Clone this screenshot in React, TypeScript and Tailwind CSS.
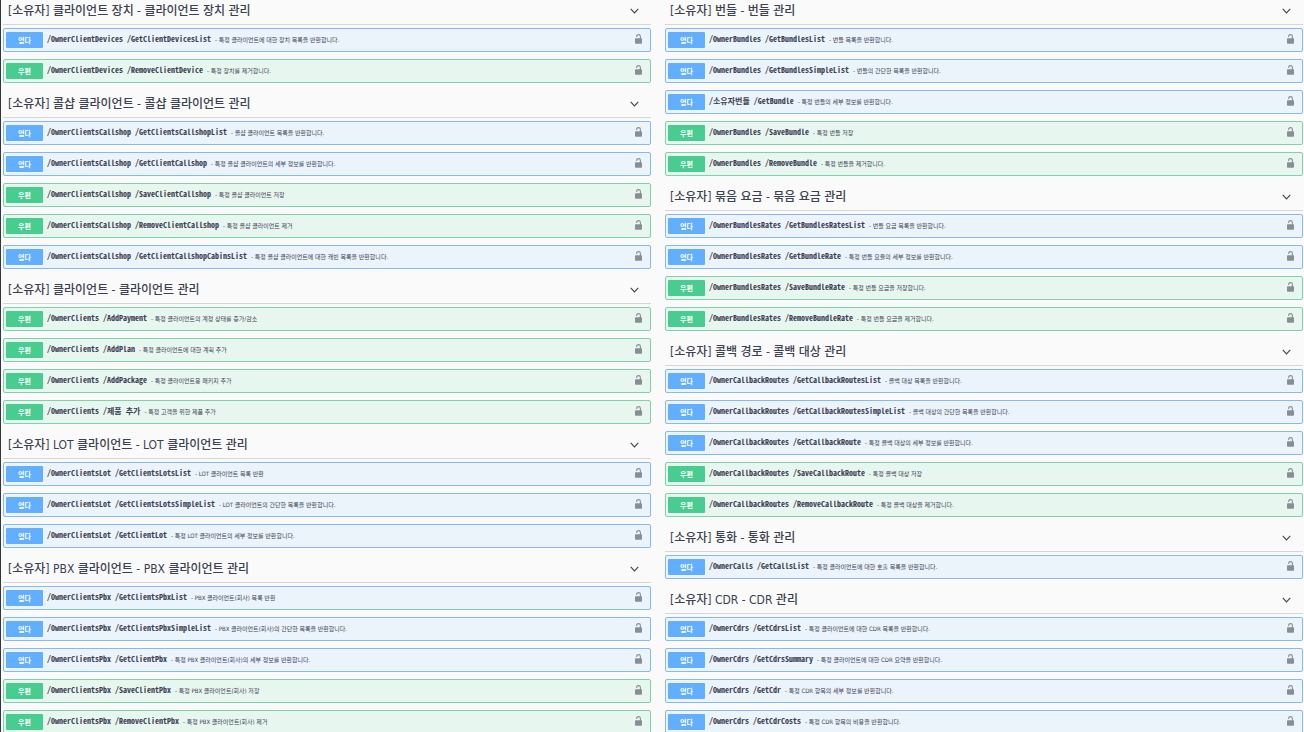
import React, { useState } from 'react';
import clsx from 'clsx';

type Method = 'get' | 'post';

interface Endpoint {
  method: Method;
  group: string;
  action: string;
  summary: string;
}

interface ApiSection {
  title: string;
  endpoints: Endpoint[];
}

const get = (group: string, action: string, summary: string): Endpoint => ({ method: 'get', group, action, summary });
const post = (group: string, action: string, summary: string): Endpoint => ({ method: 'post', group, action, summary });

const LEFT: ApiSection[] = [
  {
    title: '[소유자] 클라이언트 장치 - 클라이언트 장치 관리',
    endpoints: [
      get('/OwnerClientDevices', '/GetClientDevicesList', '특정 클라이언트에 대한 장치 목록을 반환합니다.'),
      post('/OwnerClientDevices', '/RemoveClientDevice', '특정 장치를 제거합니다.'),
    ],
  },
  {
    title: '[소유자] 콜샵 클라이언트 - 콜샵 클라이언트 관리',
    endpoints: [
      get('/OwnerClientsCallshop', '/GetClientsCallshopList', '콜샵 클라이언트 목록을 반환합니다.'),
      get('/OwnerClientsCallshop', '/GetClientCallshop', '특정 콜샵 클라이언트의 세부 정보를 반환합니다.'),
      post('/OwnerClientsCallshop', '/SaveClientCallshop', '특정 콜샵 클라이언트 저장'),
      post('/OwnerClientsCallshop', '/RemoveClientCallshop', '특정 콜샵 클라이언트 제거'),
      get('/OwnerClientsCallshop', '/GetClientCallshopCabinsList', '특정 콜샵 클라이언트에 대한 캐빈 목록을 반환합니다.'),
    ],
  },
  {
    title: '[소유자] 클라이언트 - 클라이언트 관리',
    endpoints: [
      post('/OwnerClients', '/AddPayment', '특정 클라이언트의 계정 상태를 증가/감소'),
      post('/OwnerClients', '/AddPlan', '특정 클라이언트에 대한 계획 추가'),
      post('/OwnerClients', '/AddPackage', '특정 클라이언트용 패키지 추가'),
      post('/OwnerClients', '/제품 추가', '특정 고객을 위한 제품 추가'),
    ],
  },
  {
    title: '[소유자] LOT 클라이언트 - LOT 클라이언트 관리',
    endpoints: [
      get('/OwnerClientsLot', '/GetClientsLotsList', 'LOT 클라이언트 목록 반환'),
      get('/OwnerClientsLot', '/GetClientsLotsSimpleList', 'LOT 클라이언트의 간단한 목록을 반환합니다.'),
      get('/OwnerClientsLot', '/GetClientLot', '특정 LOT 클라이언트의 세부 정보를 반환합니다.'),
    ],
  },
  {
    title: '[소유자] PBX 클라이언트 - PBX 클라이언트 관리',
    endpoints: [
      get('/OwnerClientsPbx', '/GetClientsPbxList', 'PBX 클라이언트(회사) 목록 반환'),
      get('/OwnerClientsPbx', '/GetClientsPbxSimpleList', 'PBX 클라이언트(회사)의 간단한 목록을 반환합니다.'),
      get('/OwnerClientsPbx', '/GetClientPbx', '특정 PBX 클라이언트(회사)의 세부 정보를 반환합니다.'),
      post('/OwnerClientsPbx', '/SaveClientPbx', '특정 PBX 클라이언트(회사) 저장'),
      post('/OwnerClientsPbx', '/RemoveClientPbx', '특정 PBX 클라이언트(회사) 제거'),
    ],
  },
];

const RIGHT: ApiSection[] = [
  {
    title: '[소유자] 번들 - 번들 관리',
    endpoints: [
      get('/OwnerBundles', '/GetBundlesList', '번들 목록을 반환합니다.'),
      get('/OwnerBundles', '/GetBundlesSimpleList', '번들의 간단한 목록을 반환합니다.'),
      get('/소유자번들', '/GetBundle', '특정 번들의 세부 정보를 반환합니다.'),
      post('/OwnerBundles', '/SaveBundle', '특정 번들 저장'),
      post('/OwnerBundles', '/RemoveBundle', '특정 번들을 제거합니다.'),
    ],
  },
  {
    title: '[소유자] 묶음 요금 - 묶음 요금 관리',
    endpoints: [
      get('/OwnerBundlesRates', '/GetBundlesRatesList', '번들 요금 목록을 반환합니다.'),
      get('/OwnerBundlesRates', '/GetBundleRate', '특정 번들 요율의 세부 정보를 반환합니다.'),
      post('/OwnerBundlesRates', '/SaveBundleRate', '특정 번들 요금을 저장합니다.'),
      post('/OwnerBundlesRates', '/RemoveBundleRate', '특정 번들 요금을 제거합니다.'),
    ],
  },
  {
    title: '[소유자] 콜백 경로 - 콜백 대상 관리',
    endpoints: [
      get('/OwnerCallbackRoutes', '/GetCallbackRoutesList', '콜백 대상 목록을 반환합니다.'),
      get('/OwnerCallbackRoutes', '/GetCallbackRoutesSimpleList', '콜백 대상의 간단한 목록을 반환합니다.'),
      get('/OwnerCallbackRoutes', '/GetCallbackRoute', '특정 콜백 대상의 세부 정보를 반환합니다.'),
      post('/OwnerCallbackRoutes', '/SaveCallbackRoute', '특정 콜백 대상 저장'),
      post('/OwnerCallbackRoutes', '/RemoveCallbackRoute', '특정 콜백 대상을 제거합니다.'),
    ],
  },
  {
    title: '[소유자] 통화 - 통화 관리',
    endpoints: [get('/OwnerCalls', '/GetCallsList', '특정 클라이언트에 대한 호출 목록을 반환합니다.')],
  },
  {
    title: '[소유자] CDR - CDR 관리',
    endpoints: [
      get('/OwnerCdrs', '/GetCdrsList', '특정 클라이언트에 대한 CDR 목록을 반환합니다.'),
      get('/OwnerCdrs', '/GetCdrsSummary', '특정 클라이언트에 대한 CDR 요약을 반환합니다.'),
      get('/OwnerCdrs', '/GetCdr', '특정 CDR 항목의 세부 정보를 반환합니다.'),
      get('/OwnerCdrs', '/GetCdrCosts', '특정 CDR 항목의 비용을 반환합니다.'),
    ],
  },
];

function UnlockIcon() {
  return (
    <svg viewBox="0 0 7 10" className="w-[7px] h-[10px]" aria-hidden="true">
      <path d="M1.7 3V2.2C1.7 1.2 2.4 0.6 3.5 0.6S5.4 1.2 5.4 2.4V5" fill="none" stroke="currentColor" strokeWidth="1.1" />
      <rect y="4.2" width="7" height="5.6" rx="0.8" fill="currentColor" />
    </svg>
  );
}

function EndpointRow({ endpoint }: { endpoint: Endpoint }) {
  const isGet = endpoint.method === 'get';

  return (
    <div
      className={clsx(
        'h-6 flex items-center border rounded-xs pl-0.5 pr-2',
        isGet ? 'border-[#85b9f0] bg-[#ebf3fb]' : 'border-[#7fd3ac] bg-[#e8f6f0]'
      )}
    >
      <button type="button" className="flex-1 min-w-0 flex items-center text-left whitespace-nowrap cursor-pointer">
        <span
          className={clsx(
            "w-[37px] h-4 shrink-0 flex items-center justify-center rounded-[1px] text-white text-[7px] leading-none font-bold font-['Noto_Sans_CJK_KR',sans-serif]",
            isGet ? 'bg-[#61affe]' : 'bg-[#49cc90]'
          )}
        >
          {isGet ? '얻다' : '우편'}
        </span>
        <span className="flex gap-1 pl-1 pb-0.5 text-[8px] leading-3 font-bold text-[#3b4151] font-['Noto_Sans_Mono_CJK_KR','Noto_Sans_CJK_KR',monospace]">
          <span>{endpoint.group}</span>
          <span>{endpoint.action}</span>
        </span>
        <span className="pl-1 pb-px text-[6px] leading-3 text-[#3b4151] font-['DejaVu_Sans_Condensed','Noto_Sans_CJK_KR',sans-serif]">
          - {endpoint.summary}
        </span>
      </button>
      <button type="button" aria-label="인증" className="shrink-0 pb-0.5 text-[#888e94] cursor-pointer">
        <UnlockIcon />
      </button>
    </div>
  );
}

function SectionBlock({ section }: { section: ApiSection }) {
  const [open, setOpen] = useState(true);

  return (
    <section>
      <h3 className="mb-[3px] border-b border-[#d6d6d8]">
        <button
          type="button"
          aria-expanded={open}
          onClick={() => setOpen(!open)}
          className="w-full h-6 flex items-center justify-between pl-[5px] pr-3 pb-[3px] text-xs font-medium text-[#3b4151] font-['DejaVu_Sans_Condensed','Noto_Sans_CJK_KR',sans-serif] cursor-pointer"
        >
          <span className="truncate">{section.title}</span>
          <svg viewBox="0 0 10 6" className={clsx('w-[9px] h-[6px] shrink-0', !open && '-rotate-90')} fill="none" stroke="#3f444c" strokeWidth="1.2" aria-hidden="true">
            <path d="M0.8 0.6 5 5.1 9.2 0.6" />
          </svg>
        </button>
      </h3>
      {open && (
        <div className="flex flex-col gap-[7px]">
          {section.endpoints.map((endpoint) => (
            <EndpointRow key={endpoint.group + endpoint.action} endpoint={endpoint} />
          ))}
        </div>
      )}
    </section>
  );
}

export default function App() {
  return (
    <main className="min-h-screen grid grid-cols-[648fr_638fr] items-start gap-[14px] border-l border-[#33363b] bg-[#fafafa] pl-0.5 pr-px">
      {[LEFT, RIGHT].map((sections, i) => (
        <div key={i} className="min-w-0 flex flex-col gap-[10px]">
          {sections.map((section) => (
            <SectionBlock key={section.title} section={section} />
          ))}
        </div>
      ))}
    </main>
  );
}
